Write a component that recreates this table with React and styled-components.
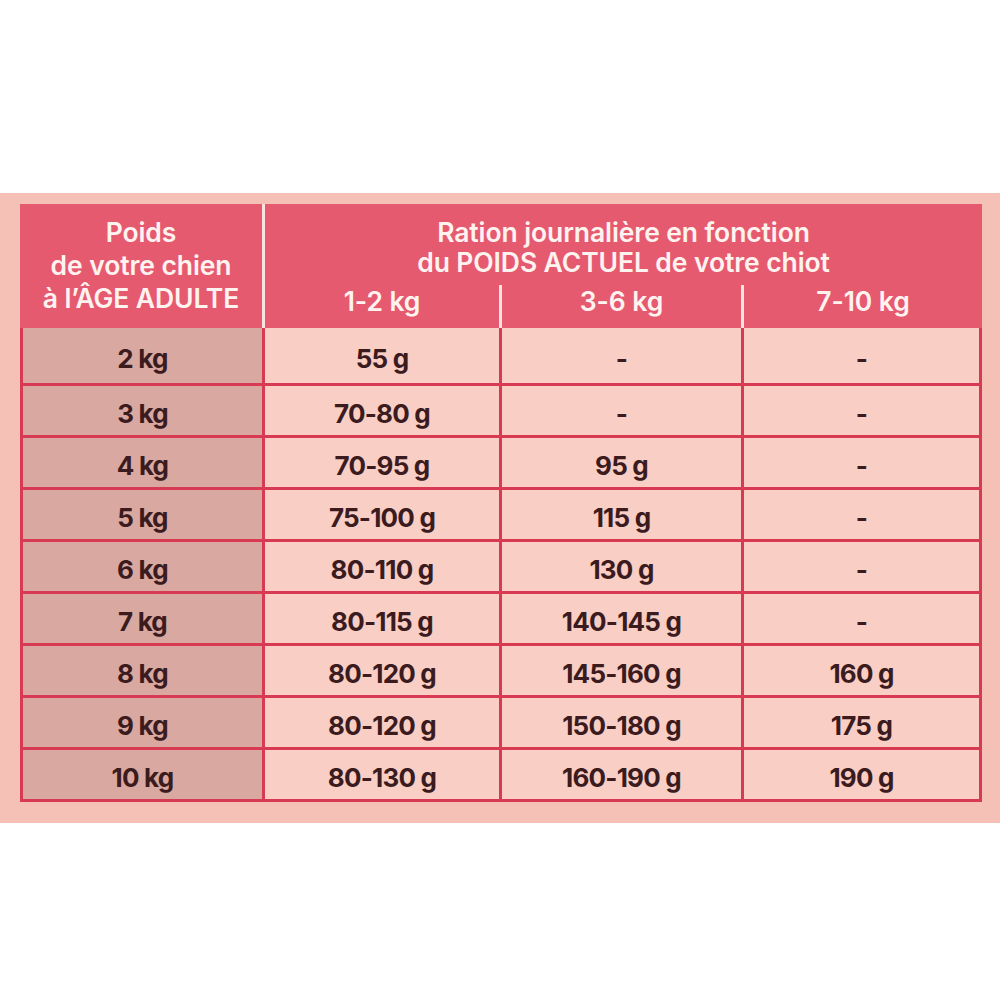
import React from "react";
import styled, { createGlobalStyle } from "styled-components";

const GlobalStyle = createGlobalStyle`
  body {
    margin: 0;
    background: #ffffff;
    font-family: "Inter", "Open Sans", sans-serif;
  }
`;

const RED = "#d93a53";

const Card = styled.div`
  margin-top: 193px;
  width: 1000px;
  height: 630px;
  box-sizing: border-box;
  padding: 11px 18px 0 20px;
  background: #f5c0b5;
`;

const Table = styled.div`
  width: 962px;
  display: flex;
  flex-direction: column;
`;

const Header = styled.div`
  display: grid;
  grid-template-columns: 242px 3px 1fr;
  height: 124px;
  background: #e65a70;
  color: #fff3f0;
  font-weight: 600;
  font-size: 26.5px;
  letter-spacing: -0.1px;
  white-space: nowrap;
`;

const HeadDivider = styled.div`
  background: #fbe3de;
`;

const HeadLeft = styled.div`
  display: flex;
  flex-direction: column;
  align-items: center;
  padding-top: 12px;
  line-height: 33px;
`;

const HeadRight = styled.div`
  display: flex;
  flex-direction: column;
`;

const HeadTitle = styled.div`
  text-align: center;
  line-height: 30px;
  padding-top: 13px;
  height: 81px;
  box-sizing: border-box;
`;

const SubRow = styled.div`
  flex: 1;
  display: grid;
  grid-template-columns: 234px 3px 239px 3px 1fr;
`;

const SubCell = styled.div`
  display: flex;
  justify-content: center;
  line-height: 32px;
`;

const SubDivider = styled.div`
  background: #fbe3de;
`;

const Body = styled.div`
  display: grid;
  grid-template-columns: 239px 234px 239px 235px;
  grid-template-rows: 55px repeat(8, 49px);
  gap: 3px;
  padding: 0 3px 3px 3px;
  background: ${RED};
`;

const Cell = styled.div`
  display: flex;
  align-items: center;
  justify-content: center;
  padding-top: 6px;
  box-sizing: border-box;
  background: ${(p) => (p.$shaded ? "#d9a8a0" : "#f8cec5")};
  color: #3b1b1e;
  font-weight: 700;
  font-size: 26px;
  letter-spacing: -0.8px;
`;

const rows = [
  ["2 kg", "55 g", "-", "-"],
  ["3 kg", "70-80 g", "-", "-"],
  ["4 kg", "70-95 g", "95 g", "-"],
  ["5 kg", "75-100 g", "115 g", "-"],
  ["6 kg", "80-110 g", "130 g", "-"],
  ["7 kg", "80-115 g", "140-145 g", "-"],
  ["8 kg", "80-120 g", "145-160 g", "160 g"],
  ["9 kg", "80-120 g", "150-180 g", "175 g"],
  ["10 kg", "80-130 g", "160-190 g", "190 g"],
];

export default function App() {
  return (
    <>
      <GlobalStyle />
      <Card>
        <Table>
          <Header>
            <HeadLeft>
              <span>Poids</span>
              <span>de votre chien</span>
              <span>à l’ÂGE ADULTE</span>
            </HeadLeft>
            <HeadDivider />
            <HeadRight>
              <HeadTitle>
                Ration journalière en fonction
                <br />
                du POIDS ACTUEL de votre chiot
              </HeadTitle>
              <SubRow>
                <SubCell>1-2 kg</SubCell>
                <SubDivider />
                <SubCell>3-6 kg</SubCell>
                <SubDivider />
                <SubCell>7-10 kg</SubCell>
              </SubRow>
            </HeadRight>
          </Header>
          <Body>
            {rows.map((r) =>
              r.map((v, i) => (
                <Cell key={r[0] + i} $shaded={i === 0}>
                  {v}
                </Cell>
              ))
            )}
          </Body>
        </Table>
      </Card>
    </>
  );
}
